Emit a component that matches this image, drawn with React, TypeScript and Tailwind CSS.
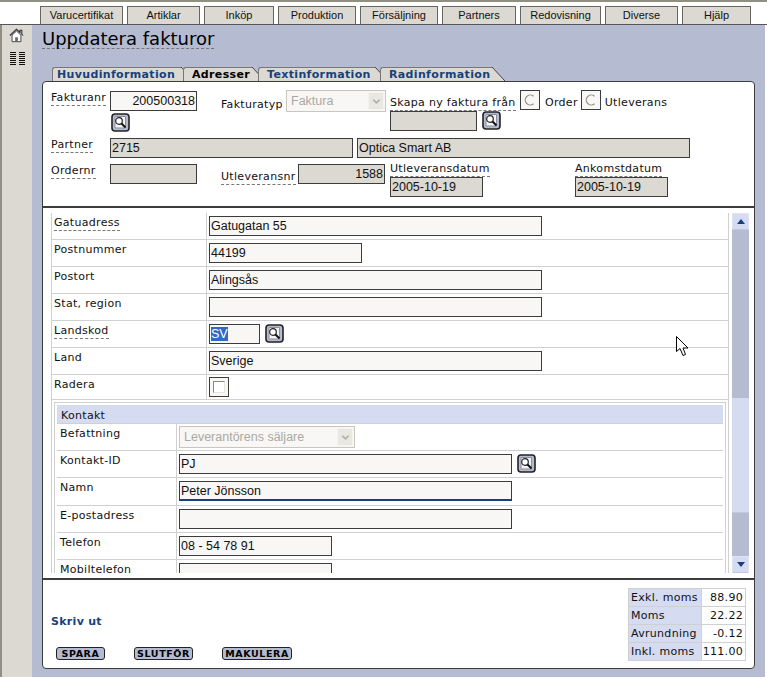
import type { ReactNode } from 'react';
import { ChevronDown } from 'lucide-react';

const sans = "font-['Liberation_Sans',Arial,sans-serif]";
const label = "font-['DejaVu_Sans',Verdana,sans-serif] text-[11px] leading-[13px] tracking-[0.3px] text-[#111]";

const topTabs = [
  { name: 'Varucertifikat', width: 'w-[83px]' },
  { name: 'Artiklar', width: 'w-[73px]' },
  { name: 'Inköp', width: 'w-[70px]' },
  { name: 'Produktion', width: 'w-[78px]' },
  { name: 'Försäljning', width: 'w-[78px]' },
  { name: 'Partners', width: 'w-[74px]' },
  { name: 'Redovisning', width: 'w-[81px]' },
  { name: 'Diverse', width: 'w-[73px]' },
  { name: 'Hjälp', width: 'w-[69px]' },
];

const subTabs = [
  { name: 'Huvudinformation', width: 'w-[129px] pl-[4px]', color: 'text-[#17417c]', overlap: '' },
  { name: 'Adresser', width: 'w-[69px] pl-[8px]', color: 'text-black', overlap: '-ml-[11px]' },
  { name: 'Textinformation', width: 'w-[117px] pl-[8px]', color: 'text-[#17417c]', overlap: '-ml-[7px]' },
  { name: 'Radinformation', width: 'w-[112px] pl-[8px]', color: 'text-[#17417c]', overlap: '-ml-[8px]' },
];

const totals = [
  { name: 'Exkl. moms', value: '88.90' },
  { name: 'Moms', value: '22.22' },
  { name: 'Avrundning', value: '-0.12' },
  { name: 'Inkl. moms', value: '111.00' },
];

function Field({ width, value, grey, right, focused, children }: {
  width: string;
  value?: string;
  grey?: boolean;
  right?: boolean;
  focused?: boolean;
  children?: ReactNode;
}) {
  return (
    <div
      className={`${width} h-[20px] shrink-0 border border-[#3c3c3c] px-[1px] ${sans} text-[12.5px] leading-[18px] text-[#111] whitespace-nowrap overflow-hidden ${grey ? 'bg-[#dcd9d2]' : 'bg-[#f8f7f5]'} ${right ? 'text-right' : ''} ${focused ? 'border-b-2 border-b-[#17417c]' : ''}`}
    >
      {value}
      {children}
    </div>
  );
}

function DisabledSelect({ width, value }: { width: string; value: string }) {
  return (
    <div className={`${width} h-[22px] shrink-0 border border-[#c9c7bc] bg-[#f8f7f5] flex items-center justify-between pl-[4px] pr-[1px] ${sans} text-[12.5px] text-[#aaa99f]`}>
      <span>{value}</span>
      <span className="w-[16px] h-[18px] bg-[#e9e7e1] border border-[#f4f3ef] flex items-center justify-center">
        <ChevronDown className="w-[11px] h-[11px] text-[#b4b3a8]" strokeWidth={3.5} />
      </span>
    </div>
  );
}

function LensButton() {
  return (
    <svg width="19" height="19" viewBox="0 0 19 19" className="shrink-0 block">
      <rect x="1" y="1" width="17" height="17" rx="3" fill="#b5bcd2" stroke="#222" strokeWidth="1.6" />
      <path d="M4 3.5h10.5V15H4z" fill="#f4f4f4" stroke="#8a8f9e" />
      <circle cx="8" cy="8" r="3.3" fill="#fff" stroke="#222" strokeWidth="1.2" />
      <path d="M10.5 10.5l4 4" stroke="#111" strokeWidth="2" />
    </svg>
  );
}

function RadioBox() {
  return (
    <div className="w-[20px] h-[20px] shrink-0 border border-[#3c3c3c] bg-[#f8f7f5] flex items-center justify-center">
      <svg width="12" height="12" viewBox="0 0 12 12">
        <path d="M9.5 2.2A5 5 0 1 0 9.5 9.8" fill="none" stroke="#8b8a80" strokeWidth="1.2" />
      </svg>
    </div>
  );
}

function Dashed({ children }: { children: ReactNode }) {
  return <div className={`${label} w-fit whitespace-nowrap border-b border-dashed border-[#777] pb-[1px]`}>{children}</div>;
}

function Row({ title, dashed, left, height, children }: {
  title: string;
  dashed?: boolean;
  left: string;
  height: string;
  children: ReactNode;
}) {
  return (
    <div className={`flex ${height} border-b border-[#d0d0d0]`}>
      <div className={`${left} shrink-0 border-r border-[#d0d0d0] pt-[3px]`}>
        {dashed ? <Dashed>{title}</Dashed> : <div className={label}>{title}</div>}
      </div>
      <div className="flex items-start pl-[2px] pt-[3px] gap-[5px]">{children}</div>
    </div>
  );
}

export default function App() {
  const outer = 'w-[155px] pl-[2px]';
  const inner = 'w-[120px] pl-[3px]';

  return (
    <div className="relative w-[767px] h-[679px] overflow-hidden bg-white">
      {/* top navigation */}
      <div className="h-[25px] border-t-2 border-[#8f8f84] border-b border-b-[#555] flex items-end pl-[40px] gap-[4px]">
        {topTabs.map(tab => (
          <div
            key={tab.name}
            className={`${tab.width} h-[18px] border border-b-0 border-[#66665f] bg-[#dcd9d2] text-center ${sans} text-[11px] leading-[17px] text-[#111]`}
          >
            {tab.name}
          </div>
        ))}
      </div>

      <div className="flex h-[652px] pr-[2px]">
        {/* side rail */}
        <div className="w-[32px] shrink-0 border-l-2 border-[#8f8f84] bg-[#dcd9d2] flex flex-col pl-[7px] pt-[3px]">
          <svg width="15" height="15" viewBox="0 0 17 16">
            <path d="M1 8L8.5 1l4 3.6V2h2v4.5L16 8" fill="none" stroke="#333" strokeWidth="1.2" />
            <path d="M3.5 7.5V15h10V7.5L8.5 3z" fill="#fff" stroke="#333" />
            <path d="M7 15v-5h3v5z" fill="#666" />
          </svg>
          <svg width="15" height="14" viewBox="0 0 15 14" className="mt-[9px] ml-[1px]">
            <path d="M0 .5h6M9 .5h6M0 2.5h6M9 2.5h6M0 4.5h6M9 4.5h6M0 6.5h6M9 6.5h6M0 8.5h6M9 8.5h6M0 10.5h6M9 10.5h6M0 12.5h6M9 12.5h6" stroke="#111" />
          </svg>
        </div>

        {/* main */}
        <div className="w-[733px] bg-[#b5bcd2] pl-[10px] pt-[4px]">
          <h1 className="w-fit border-b border-dashed border-[#777] font-['DejaVu_Sans',Verdana,sans-serif] text-[18px] leading-[19px] font-normal text-black">
            Uppdatera fakturor
          </h1>

          <div className="flex items-end h-[14px] mt-[18px] pl-[10px]">
            {subTabs.map(tab => (
              <div key={tab.name} className={`flex h-[14px] ${tab.overlap}`}>
                <div className={`${tab.width} h-[14px] bg-[#dcd9d2] border-t border-l border-[#777] rounded-tl-[3px] font-['DejaVu_Sans',Verdana,sans-serif] font-bold text-[11px] leading-[13px] tracking-[0.35px] ${tab.color}`}>
                  {tab.name}
                </div>
                <svg width="13" height="14" viewBox="0 0 13 14" className="block">
                  <path d="M0 0l13 14H0z" fill="#dcd9d2" />
                  <path d="M0 0l13 14" stroke="#444" fill="none" />
                </svg>
              </div>
            ))}
          </div>

          <div className="relative w-[713px] border border-[#3c3c3c] rounded-[4px] bg-white">
            {/* invoice head */}
            <div className="h-[126px] border-b-2 border-[#3c3c3c] pl-[8px] pt-[8px]">
              <div className="flex h-[48px] items-start">
                <div className="w-[59px] pt-[1px]"><Dashed>Fakturanr</Dashed></div>
                <div className="w-[87px] flex flex-col gap-[2px] mt-[1px]">
                  <Field width="w-[87px]" value="200500318" right />
                  <div className="ml-[1px]"><LensButton /></div>
                </div>
                <div className={`${label} w-[65px] ml-[24px] pt-[8px]`}>Fakturatyp</div>
                <DisabledSelect width="w-[100px]" value="Faktura" />
                <div className="ml-[4px] flex flex-col">
                  <div className="flex items-start h-[21px]">
                    <div className="w-[130px] pt-[6px]"><Dashed>Skapa ny faktura från</Dashed></div>
                    <RadioBox />
                    <div className={`${label} ml-[5px] mr-[3px] pt-[6px]`}>Order</div>
                    <RadioBox />
                    <div className={`${label} ml-[4px] pt-[6px]`}>Utleverans</div>
                  </div>
                  <div className="flex items-start gap-[5px]">
                    <Field width="w-[87px]" grey />
                    <LensButton />
                  </div>
                </div>
              </div>

              <div className="flex items-start h-[26px]">
                <div className="w-[59px]"><Dashed>Partner</Dashed></div>
                <Field width="w-[243px]" value="2715" grey />
                <div className="ml-[4px]"><Field width="w-[333px]" value="Optica Smart AB" grey /></div>
              </div>

              <div className="flex items-start">
                <div className="w-[59px]"><Dashed>Ordernr</Dashed></div>
                <Field width="w-[87px]" grey />
                <div className="w-[77px] ml-[24px] pt-[6px]"><Dashed>Utleveransnr</Dashed></div>
                <Field width="w-[87px]" value="1588" grey right />
                <div className="ml-[5px] w-[185px] -mt-[2px]">
                  <Dashed>Utleveransdatum</Dashed>
                  <Field width="w-[93px]" value="2005-10-19" grey />
                </div>
                <div className="-mt-[2px]">
                  <Dashed>Ankomstdatum</Dashed>
                  <Field width="w-[93px]" value="2005-10-19" grey />
                </div>
              </div>
            </div>

            {/* scrolling address rows */}
            <div className="h-[372px] border-b-2 border-[#3c3c3c] pl-[8px] pt-[5px] flex items-start">
              <div className="w-[678px] h-[360px] overflow-hidden border-l border-r border-[#d0d0d0]">
                <Row title="Gatuadress" dashed left={outer} height="h-[27px]">
                  <Field width="w-[333px]" value="Gatugatan 55" />
                </Row>
                <Row title="Postnummer" left={outer} height="h-[27px]">
                  <Field width="w-[153px]" value="44199" />
                </Row>
                <Row title="Postort" left={outer} height="h-[27px]">
                  <Field width="w-[333px]" value="Alingsås" />
                </Row>
                <Row title="Stat, region" left={outer} height="h-[27px]">
                  <Field width="w-[333px]" />
                </Row>
                <Row title="Landskod" dashed left={outer} height="h-[27px]">
                  <Field width="w-[51px]">
                    <span className="bg-[#316ac5] text-white">SV</span>
                  </Field>
                  <LensButton />
                </Row>
                <Row title="Land" left={outer} height="h-[27px]">
                  <Field width="w-[333px]" value="Sverige" />
                </Row>
                <Row title="Radera" left={outer} height="h-[25px]">
                  <div className="w-[20px] h-[20px] -mt-[1px] border border-[#3c3c3c] bg-[#f8f7f5] flex items-center justify-center">
                    <div className="w-[12px] h-[12px] border border-[#8b8a80] border-r-[#e6e4dc] border-b-[#e6e4dc] bg-white" />
                  </div>
                </Row>

                {/* contact block */}
                <div className="mx-[2px] mt-[2px] border border-[#d0d0d0] pt-[2px] px-[2px]">
                  <div className={`${label} h-[18px] bg-[#d5dbf0] pl-[4px] pt-[4px]`}>Kontakt</div>
                  <div className="border-t border-[#d0d0d0]">
                    <Row title="Befattning" left={inner} height="h-[27px]">
                      <div className="-mt-[1px]"><DisabledSelect width="w-[176px]" value="Leverantörens säljare" /></div>
                    </Row>
                    <Row title="Kontakt-ID" left={inner} height="h-[27px]">
                      <Field width="w-[333px]" value="PJ" />
                      <LensButton />
                    </Row>
                    <Row title="Namn" left={inner} height="h-[28px]">
                      <Field width="w-[333px]" value="Peter Jönsson" focused />
                    </Row>
                    <Row title="E-postadress" left={inner} height="h-[27px]">
                      <Field width="w-[333px]" />
                    </Row>
                    <Row title="Telefon" left={inner} height="h-[27px]">
                      <Field width="w-[153px]" value="08 - 54 78 91" />
                    </Row>
                    <Row title="Mobiltelefon" left={inner} height="h-[27px]">
                      <Field width="w-[153px]" />
                    </Row>
                  </div>
                </div>
              </div>

              {/* scrollbar */}
              <div className="ml-[3px] w-[17px] h-[360px] bg-[#b5bcd2] flex flex-col">
                <div className="h-[17px] bg-[#d5dbf0] border border-[#dfe3f3] border-b-[#c3c8da] flex items-center justify-center">
                  <svg width="8" height="5" viewBox="0 0 8 5"><path d="M4 0l4 5H0z" fill="#17417c" /></svg>
                </div>
                <div className="h-[168px]" />
                <div className="h-[115px] bg-[#d5dbf0] border-b border-[#c3c8da]" />
                <div className="h-[43px]" />
                <div className="h-[17px] bg-[#d5dbf0] border border-[#dfe3f3] border-b-[#c3c8da] flex items-center justify-center">
                  <svg width="8" height="5" viewBox="0 0 8 5"><path d="M4 5l4-5H0z" fill="#17417c" /></svg>
                </div>
              </div>
            </div>

            {/* footer */}
            <div className="h-[88px] pl-[8px] pr-[8px] flex justify-between">
              <div className="flex flex-col">
                <div className="mt-[35px] font-['DejaVu_Sans',Verdana,sans-serif] font-bold text-[11px] leading-[13px] tracking-[0.3px] text-[#17417c]">
                  Skriv ut
                </div>
                <div className="flex gap-[29px] mt-[19px] ml-[5px]">
                  {[
                    { name: 'SPARA', width: 'w-[49px]' },
                    { name: 'SLUTFÖR', width: 'w-[59px]' },
                    { name: 'MAKULERA', width: 'w-[70px]' },
                  ].map(btn => (
                    <button
                      key={btn.name}
                      className={`${btn.width} h-[13px] bg-[#b5bcd2] border border-[#222] rounded-[3px] font-['DejaVu_Sans',Verdana,sans-serif] font-bold text-[9.5px] leading-[11px] tracking-[0.6px] text-black`}
                    >
                      {btn.name}
                    </button>
                  ))}
                </div>
              </div>
              <table className={`${label} table-fixed w-[117px] border-collapse mt-[8px] h-[73px] self-start`}>
                <tbody>
                  {totals.map(row => (
                    <tr key={row.name} className="h-[18px]">
                      <td className="w-[73px] border border-[#d0d0d0] bg-[#d5dbf0] pl-[2px] py-0 whitespace-nowrap">{row.name}</td>
                      <td className="w-[44px] border border-[#d0d0d0] pr-[2px] py-0 text-right whitespace-nowrap">{row.value}</td>
                    </tr>
                  ))}
                </tbody>
              </table>
            </div>
          </div>
        </div>
      </div>

      {/* mouse pointer */}
      <svg width="14" height="22" viewBox="0 0 14 22" className="absolute left-[676px] top-[336px]">
        <path d="M.5.5v15l3.5-3 3 7 2.5-1-2.5-6.5h5z" fill="#fff" stroke="#000" />
      </svg>
    </div>
  );
}
